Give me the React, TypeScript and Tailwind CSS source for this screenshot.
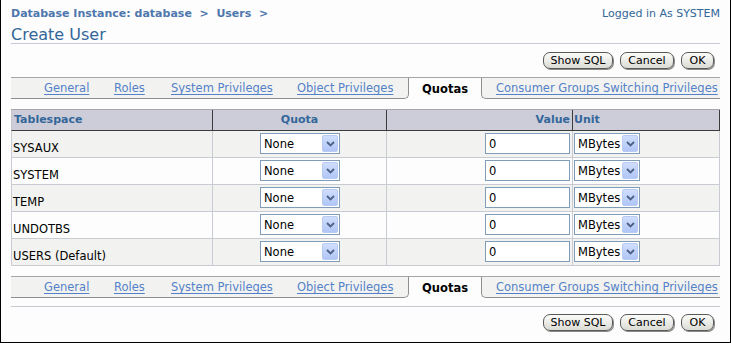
import React from "react";

const FONT = "font-['DejaVu_Sans',sans-serif]";

function Btn({ label, w }: { label: string; w: string }) {
  return (
    <div
      className={`${w} h-[17px] rounded-[7px] border border-[#5a5a5a] bg-gradient-to-b from-[#fbfbf9] to-[#dcdcd6] shadow-[1px_1px_0_#8a8a8a] flex items-center justify-center text-[11px] leading-[13px] text-black`}
    >
      {label}
    </div>
  );
}

function Buttons() {
  return (
    <div className="flex justify-end gap-[7px] pr-[6px]">
      <Btn label="Show SQL" w="w-[70px]" />
      <Btn label="Cancel" w="w-[54px]" />
      <Btn label="OK" w="w-[33px]" />
    </div>
  );
}

function Link({ children }: { children: React.ReactNode }) {
  return <span className="text-[#5581c8] underline underline-offset-[2px] decoration-[1px]">{children}</span>;
}

function TabBar() {
  return (
    <div className="flex h-[22px] border-t border-[#a6a6a6] text-[11.5px] leading-[14px]">
      <div className="w-[398px] flex-none bg-[#f2f3f0] border-b border-r border-[#8e8e8e] rounded-br-[5px] flex items-center pl-[33px]">
        <div className="w-[70px]"><Link>General</Link></div>
        <div className="w-[57px]"><Link>Roles</Link></div>
        <div className="w-[126px]"><Link>System Privileges</Link></div>
        <div><Link>Object Privileges</Link></div>
      </div>
      <div className="w-[72px] flex-none flex items-center justify-center font-bold text-black">Quotas</div>
      <div className="flex-1 bg-[#f2f3f0] border-b border-l border-[#8e8e8e] rounded-bl-[5px] flex items-center pl-[14px]">
        <Link>Consumer Groups Switching Privileges</Link>
      </div>
    </div>
  );
}

function Chevron() {
  return (
    <svg width="9" height="6" viewBox="0 0 9 6">
      <path d="M1 1 L4.5 4.5 L8 1" fill="none" stroke="#4d6185" strokeWidth="1.8" />
    </svg>
  );
}

function Select({ value, w }: { value: string; w: string }) {
  return (
    <div className={`${w} h-[21px] border border-[#7f9db9] bg-white flex items-center`}>
      <span className="flex-1 pl-[3px] text-[11.5px] leading-[14px] text-black">{value}</span>
      <div className="w-[16px] h-[17px] mr-[1px] rounded-[2px] border border-[#b9cbf3] bg-gradient-to-b from-[#d0defd] to-[#b0c6f6] flex items-center justify-center">
        <Chevron />
      </div>
    </div>
  );
}

const rows = ["SYSAUX", "SYSTEM", "TEMP", "UNDOTBS", "USERS (Default)"];

function Table() {
  return (
    <div className="w-[709px] border-t border-[#a8a8a8]">
      <div className="grid grid-cols-[202px_174px_186px_147px] h-[21px] bg-[#cdcdd9] text-[11px] leading-[14px] font-bold text-[#336699]">
        <div className="border-l border-l-[#c4c6cc] border-r border-b border-[#3c3c3c] flex items-center pl-[2px]">Tablespace</div>
        <div className="border-r border-b border-[#3c3c3c] flex items-center justify-center">Quota</div>
        <div className="border-r border-b border-[#3c3c3c] flex items-center justify-end pr-[2px]">Value</div>
        <div className="border-r border-b border-[#3c3c3c] flex items-center pl-[1px]">Unit</div>
      </div>
      {rows.map((r, i) => (
        <div
          key={r}
          className={`grid grid-cols-[202px_174px_186px_147px] h-[27px] ${i % 2 === 0 ? "bg-[#f2f3f0]" : "bg-[#fcfdfc]"}`}
        >
          <div className="border-l border-r border-b border-[#c8cbd2] flex items-end pb-[2px] pl-[1px] text-[11.5px] leading-[14px] text-black">
            {r}
          </div>
          <div className="border-r border-b border-[#c8cbd2] flex justify-center pt-[2px] pl-[1px]">
            <Select value="None" w="w-[80px]" />
          </div>
          <div className="border-r border-b border-[#c8cbd2] flex justify-end pt-[2px] pr-[2px]">
            <div className="w-[85px] h-[21px] border border-[#7f9db9] bg-white flex items-center pl-[3px] text-[11.5px] leading-[14px] text-black">
              0
            </div>
          </div>
          <div className="border-r border-b border-[#c8cbd2] flex pt-[2px] pl-[1px]">
            <Select value="MBytes" w="w-[66px]" />
          </div>
        </div>
      ))}
    </div>
  );
}

export default function App() {
  return (
    <div className={`${FONT} w-[731px] h-[343px] bg-[#fcfdfc] border-l border-r border-b border-black overflow-hidden`}>
      <div className="pl-[10px] pr-[10px]">
        <div className="h-[22px] pt-[7px] flex justify-between text-[11px] leading-[14px]">
          <div className="font-bold text-[#4f77ae] whitespace-pre">Database Instance: database  &gt;  Users  &gt;</div>
          <div className="text-[#336699]">Logged in As SYSTEM</div>
        </div>
        <div className="mt-[4px] h-[18px] leading-[17px] text-[16px] text-[#336699] border-b border-[#c6c9da]">
          Create User
        </div>
        <div className="mt-[8px]">
          <Buttons />
        </div>
        <div className="mt-[8px]">
          <TabBar />
        </div>
        <div className="mt-[10px]">
          <Table />
        </div>
        <div className="mt-[10px]">
          <TabBar />
        </div>
        <div className="mt-[8px] border-t border-[#c6c9d2]" />
        <div className="mt-[7px]">
          <Buttons />
        </div>
      </div>
    </div>
  );
}
